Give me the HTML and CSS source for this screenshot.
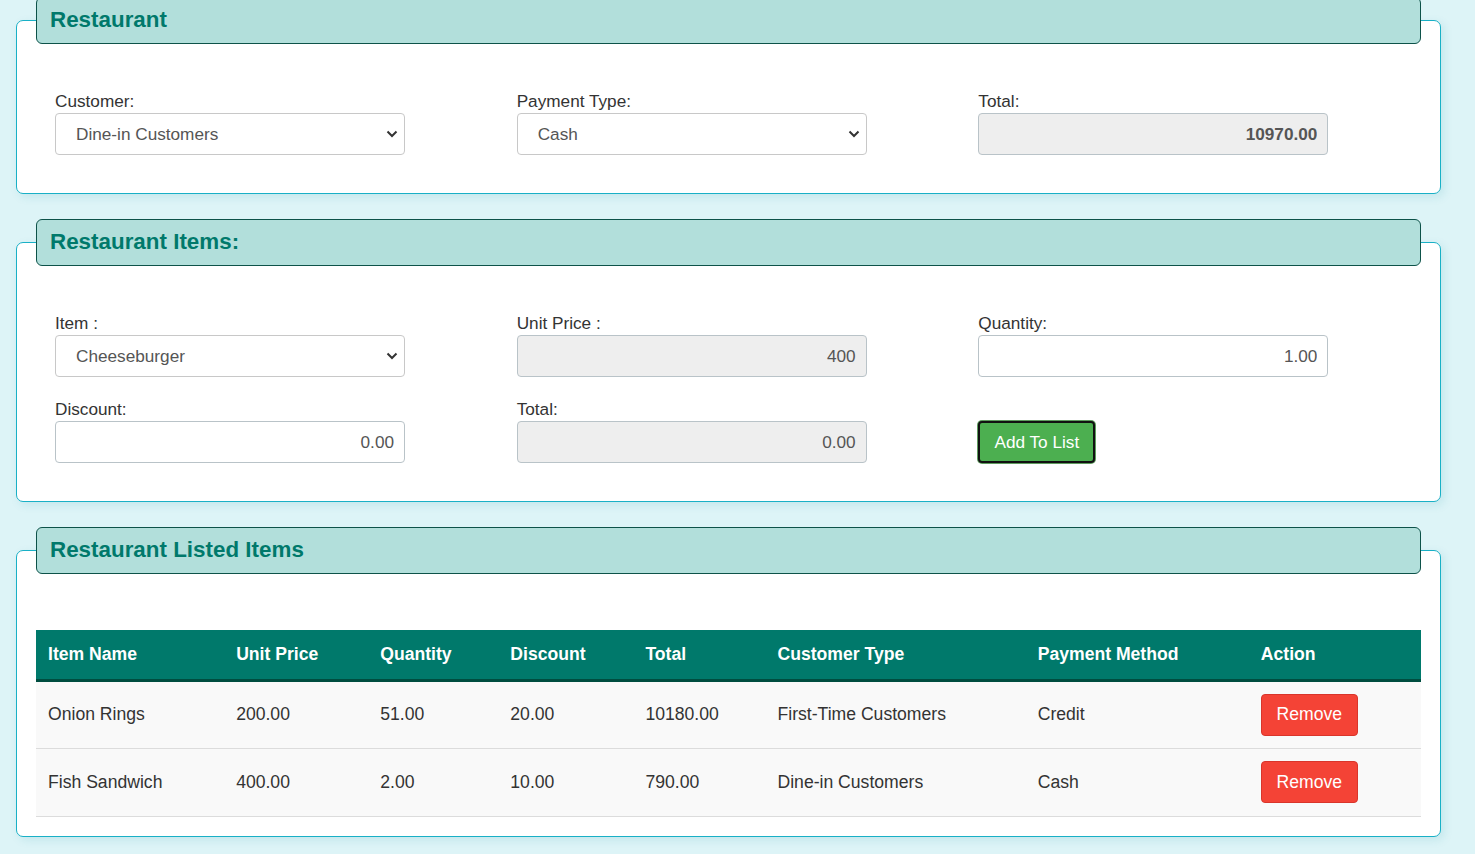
FILE: index.html
```html
<!DOCTYPE html>
<html>
<head>
<meta charset="utf-8">
<link rel="stylesheet" href="styles.css">
</head>
<body>
<main class="page">
  <section class="card">
    <h2 class="card-title">Restaurant</h2>
    <div class="form-grid">
      <div class="field">
        <label class="label">Customer:</label>
        <div class="select-wrap">
          <select class="control select"><option>Dine-in Customers</option></select>
          <svg class="chev" width="12" height="8" viewBox="0 0 12 8"><path d="M1.5 1.5 L6 6 L10.5 1.5" fill="none" stroke="#333" stroke-width="2"/></svg>
        </div>
      </div>
      <div class="field">
        <label class="label">Payment Type:</label>
        <div class="select-wrap">
          <select class="control select"><option>Cash</option></select>
          <svg class="chev" width="12" height="8" viewBox="0 0 12 8"><path d="M1.5 1.5 L6 6 L10.5 1.5" fill="none" stroke="#333" stroke-width="2"/></svg>
        </div>
      </div>
      <div class="field">
        <label class="label">Total:</label>
        <input class="control num readonly bold" value="10970.00" readonly>
      </div>
    </div>
  </section>

  <section class="card">
    <h2 class="card-title">Restaurant Items:</h2>
    <div class="form-grid">
      <div class="field">
        <label class="label">Item :</label>
        <div class="select-wrap">
          <select class="control select"><option>Cheeseburger</option></select>
          <svg class="chev" width="12" height="8" viewBox="0 0 12 8"><path d="M1.5 1.5 L6 6 L10.5 1.5" fill="none" stroke="#333" stroke-width="2"/></svg>
        </div>
      </div>
      <div class="field">
        <label class="label">Unit Price :</label>
        <input class="control num readonly" value="400" readonly>
      </div>
      <div class="field">
        <label class="label">Quantity:</label>
        <input class="control num" value="1.00">
      </div>
      <div class="field">
        <label class="label">Discount:</label>
        <input class="control num" value="0.00">
      </div>
      <div class="field">
        <label class="label">Total:</label>
        <input class="control num readonly" value="0.00" readonly>
      </div>
      <div class="field">
        <span class="label">&nbsp;</span>
        <div><button class="btn-add">Add To List</button></div>
      </div>
    </div>
  </section>

  <section class="card card-table">
    <h2 class="card-title">Restaurant Listed Items</h2>
    <table class="items">
      <colgroup>
        <col style="width:188px"><col style="width:144px"><col style="width:130px"><col style="width:135px">
        <col style="width:132px"><col style="width:260px"><col style="width:223px"><col style="width:172px">
      </colgroup>
      <thead>
        <tr><th>Item Name</th><th>Unit Price</th><th>Quantity</th><th>Discount</th><th>Total</th><th>Customer Type</th><th>Payment Method</th><th>Action</th></tr>
      </thead>
      <tbody>
        <tr><td>Onion Rings</td><td>200.00</td><td>51.00</td><td>20.00</td><td>10180.00</td><td>First-Time Customers</td><td>Credit</td><td><button class="btn-remove">Remove</button></td></tr>
        <tr><td>Fish Sandwich</td><td>400.00</td><td>2.00</td><td>10.00</td><td>790.00</td><td>Dine-in Customers</td><td>Cash</td><td><button class="btn-remove">Remove</button></td></tr>
      </tbody>
    </table>
  </section>
</main>
</body>
</html>
```

FILE: styles.css
```css
* { box-sizing: border-box; }
html, body { margin: 0; padding: 0; }
body {
  background: #ddf4f7;
  font-family: "Liberation Sans", Arial, sans-serif;
  color: #333;
  height: 854px;
  overflow: hidden;
}
.page {
  padding: 20px 0 0 16px;
  width: 1441px;
  display: flex;
  flex-direction: column;
  gap: 48px;
}
.card {
  background: #fff;
  border: 1px solid #19b0c6;
  border-radius: 7px;
  box-shadow: 3px 3px 10px rgba(0, 140, 160, 0.12);
  padding: 0 19px 38px;
}
.card-title {
  margin: -24px 0 0;
  height: 47px;
  background: #b2dfdb;
  border: 1px solid #0d5249;
  border-radius: 6px;
  color: #00796b;
  font-size: 22.4px;
  font-weight: bold;
  line-height: 44px;
  padding: 0 13px;
}
.form-grid {
  margin-top: 46px;
  display: grid;
  grid-template-columns: repeat(3, 1fr);
  row-gap: 21px;
}
.field {
  padding-left: 19px;
  display: flex;
  flex-direction: column;
}
.label {
  font-size: 17.2px;
  line-height: 22px;
  height: 22px;
  margin-bottom: 1px;
  color: #333;
}
.select-wrap {
  position: relative;
  width: 350px;
}
.control {
  width: 350px;
  height: 42px;
  border: 1px solid #c8c8c8;
  border-radius: 4px;
  background: #fff;
  font-family: "Liberation Sans", Arial, sans-serif;
  font-size: 17.2px;
  color: #555;
  margin: 0;
  outline: none;
}
.select {
  -webkit-appearance: none;
  appearance: none;
  padding: 0 30px 0 20px;
}
.chev {
  position: absolute;
  right: 7px;
  top: 17px;
  pointer-events: none;
}
.num {
  text-align: right;
  padding: 0 10px;
  border-color: #b9c3c8;
}
.readonly {
  background: #eeeeee;
}
.bold { font-weight: bold; }
.btn-add {
  height: 42px;
  width: 117px;
  background: #4caf50;
  color: #fff;
  font-family: "Liberation Sans", Arial, sans-serif;
  font-size: 17.2px;
  border: 2px solid #111;
  border-radius: 4px;
  box-shadow: 0 0 0 1px #5e9c5e;
  padding: 0;
}
.card-table { padding-bottom: 19px; }
.items {
  margin-top: 56px;
  width: 1385px;
  border-collapse: collapse;
  table-layout: fixed;
  font-size: 17.6px;
}
.items th {
  background: #00796b;
  color: #fff;
  font-weight: bold;
  text-align: left;
  height: 50px;
  padding: 0 12px;
  border-bottom: 3px solid #004d40;
}
.items td {
  background: #f9f9f9;
  height: 68px;
  padding: 0 12px;
  border-bottom: 1px solid #dcdcdc;
  color: #333;
}
.btn-remove {
  background: #f44336;
  color: #fff;
  border: 1px solid #d9352b;
  border-radius: 4px;
  width: 97px;
  height: 42px;
  font-family: "Liberation Sans", Arial, sans-serif;
  font-size: 17.6px;
  padding: 0;
}
```
